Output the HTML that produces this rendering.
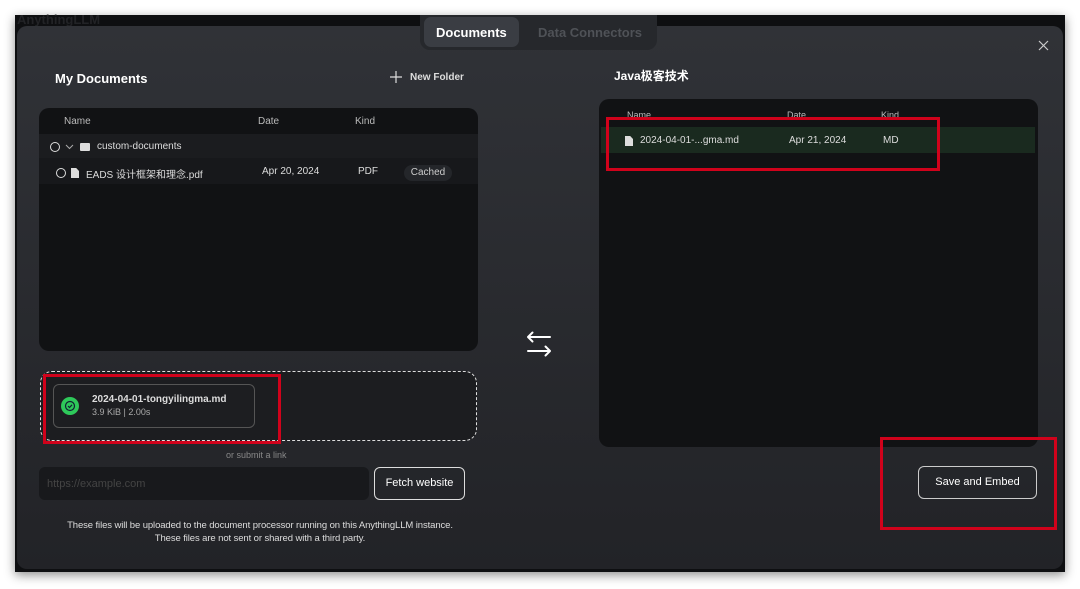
<!DOCTYPE html>
<html><head><meta charset="utf-8"><style>
*{box-sizing:border-box;margin:0;padding:0}
body{width:1080px;height:589px;background:#fff;position:relative;overflow:hidden;font-family:"Liberation Sans","Noto Sans CJK SC",sans-serif;color:#fff}
.a{position:absolute}
.win{left:15px;top:15px;width:1050px;height:557px;background:#0e0f11;box-shadow:0 3px 10px rgba(0,0,0,.45)}
.modal{left:17px;top:26px;width:1046px;height:543px;border-radius:10px;background:linear-gradient(#303237,#222327)}
.t{font-size:11px;color:#ddd;white-space:nowrap}
.h{font-size:10px;color:#bbb}
.red{border:3px solid #d0021b}
.cb{width:10px;height:10px;border:1.3px solid #ddd;border-radius:50%}
.doc{width:8px;height:10px;background:#ddd;clip-path:polygon(0 0,65% 0,100% 30%,100% 100%,0 100%)}
</style></head><body>
<div class="a win"></div>
<div class="a t" style="left:17px;top:12px;color:#222326;font-size:13px;font-weight:bold">AnythingLLM</div>
<div class="a modal"></div>
<!-- tabs -->
<div class="a" style="left:420px;top:15px;width:237px;height:35px;background:#26282c;border-radius:0 0 10px 10px"></div>
<div class="a" style="left:424px;top:17px;width:95px;height:30px;background:#3a3d43;border-radius:7px"></div>
<div class="a" style="left:436px;top:25px;font-size:13px;font-weight:bold">Documents</div>
<div class="a" style="left:538px;top:25px;font-size:13px;font-weight:bold;color:#4f5257">Data Connectors</div>
<svg class="a" style="left:1038px;top:40px" width="11" height="11" viewBox="0 0 11 11"><path d="M1 1L10 10M10 1L1 10" stroke="#ccc" stroke-width="1.2"/></svg>
<!-- left -->
<div class="a" style="left:55px;top:71px;font-size:13px;font-weight:bold">My Documents</div>
<svg class="a" style="left:390px;top:71px" width="12" height="12" viewBox="0 0 12 12"><path d="M6 0V12M0 6H12" stroke="#ddd" stroke-width="1.2"/></svg>
<div class="a" style="left:410px;top:72px;font-size:10px;font-weight:bold;color:#ddd">New Folder</div>
<div class="a" style="left:39px;top:108px;width:439px;height:243px;background:#111214;border-radius:10px;overflow:hidden">
 <div class="a" style="left:0;top:26px;width:439px;height:24px;background:#1b1c1f"></div>
 <div class="a" style="left:0;top:50px;width:439px;height:26px;background:#17181b"></div>
</div>
<div class="a h" style="left:64px;top:116px">Name</div>
<div class="a h" style="left:258px;top:116px">Date</div>
<div class="a h" style="left:355px;top:116px">Kind</div>
<div class="a cb" style="left:50px;top:142px"></div>
<svg class="a" style="left:65px;top:144px" width="9" height="6" viewBox="0 0 9 6"><path d="M1 1L4.5 4.5L8 1" stroke="#aaa" fill="none"/></svg>
<div class="a" style="left:80px;top:143px;width:10px;height:8px;background:#ddd;border-radius:1px"></div>
<div class="a t" style="left:97px;top:141px;font-size:10px">custom-documents</div>
<div class="a cb" style="left:56px;top:168px"></div>
<div class="a doc" style="left:71px;top:168px"></div>
<div class="a t" style="left:86px;top:166px;font-size:10px">EADS 设计框架和理念.pdf</div>
<div class="a t" style="left:262px;top:166px;font-size:10px">Apr 20, 2024</div>
<div class="a t" style="left:358px;top:166px;font-size:10px">PDF</div>
<div class="a" style="left:404px;top:165px;width:48px;height:16px;border-radius:8px;background:#24262a;font-size:10px;color:#ccc;text-align:center;line-height:16px">Cached</div>
<!-- upload -->
<div class="a" style="left:40px;top:371px;width:437px;height:70px;border:1.5px dashed #ddd;border-radius:12px;background:#1c1d20"></div>
<div class="a" style="left:53px;top:384px;width:202px;height:44px;border:1px solid #555;border-radius:6px;background:#1d1e21"></div>
<div class="a" style="left:61px;top:397px;width:18px;height:18px;border-radius:50%;background:#2ec95a"></div>
<svg class="a" style="left:64px;top:400px" width="12" height="12" viewBox="0 0 12 12"><circle cx="6" cy="6" r="4.5" stroke="#123" stroke-width="1.2" fill="none"/><path d="M4 6L5.5 7.5L8 4.8" stroke="#123" stroke-width="1.2" fill="none"/></svg>
<div class="a t" style="left:92px;top:394px;font-size:10px;font-weight:bold">2024-04-01-tongyilingma.md</div>
<div class="a t" style="left:92px;top:407px;font-size:9px;color:#aaa">3.9 KiB | 2.00s</div>
<div class="a red" style="left:43px;top:374px;width:238px;height:70px"></div>
<div class="a t" style="left:226px;top:450px;font-size:9px;color:#888">or submit a link</div>
<div class="a" style="left:39px;top:467px;width:330px;height:33px;background:#18191c;border-radius:6px"></div>
<div class="a t" style="left:47px;top:478px;font-size:11px;color:#444">https://example.com</div>
<div class="a" style="left:374px;top:467px;width:91px;height:33px;border:1px solid #ddd;border-radius:6px;font-size:11px;text-align:center;line-height:31px">Fetch website</div>
<div class="a" style="left:40px;top:519px;width:440px;text-align:center;font-size:9.5px;color:#ddd;line-height:13px;letter-spacing:-0.1px">These files will be uploaded to the document processor running on this AnythingLLM instance.<br>These files are not sent or shared with a third party.</div>
<!-- arrows -->
<svg class="a" style="left:525px;top:329px" width="28" height="30" viewBox="0 0 28 30"><path d="M3 8H25M3 8L7.5 3.5M3 8L7.5 12.5M3 22H25M25 22L20.5 17.5M25 22L20.5 26.5" stroke="#fff" stroke-width="2" fill="none" stroke-linecap="round"/></svg>
<!-- right -->
<div class="a" style="left:614px;top:67px;font-size:12px;font-weight:bold">Java极客技术</div>
<div class="a" style="left:599px;top:99px;width:439px;height:348px;background:#111214;border-radius:10px"></div>
<div class="a h" style="left:627px;top:110px;font-size:9px">Name</div>
<div class="a h" style="left:787px;top:110px;font-size:9px">Date</div>
<div class="a h" style="left:881px;top:110px;font-size:9px">Kind</div>
<div class="a" style="left:601px;top:127px;width:434px;height:26px;background:#1a2a1f"></div>
<div class="a doc" style="left:625px;top:136px"></div>
<div class="a t" style="left:640px;top:135px;font-size:10px">2024-04-01-...gma.md</div>
<div class="a t" style="left:789px;top:135px;font-size:10px">Apr 21, 2024</div>
<div class="a t" style="left:883px;top:135px;font-size:10px">MD</div>
<div class="a red" style="left:606px;top:117px;width:334px;height:54px"></div>
<div class="a" style="left:918px;top:466px;width:119px;height:33px;border:1px solid #ccc;border-radius:6px;font-size:11px;text-align:center;line-height:31px">Save and Embed</div>
<div class="a red" style="left:880px;top:437px;width:177px;height:93px"></div>
</body></html>
